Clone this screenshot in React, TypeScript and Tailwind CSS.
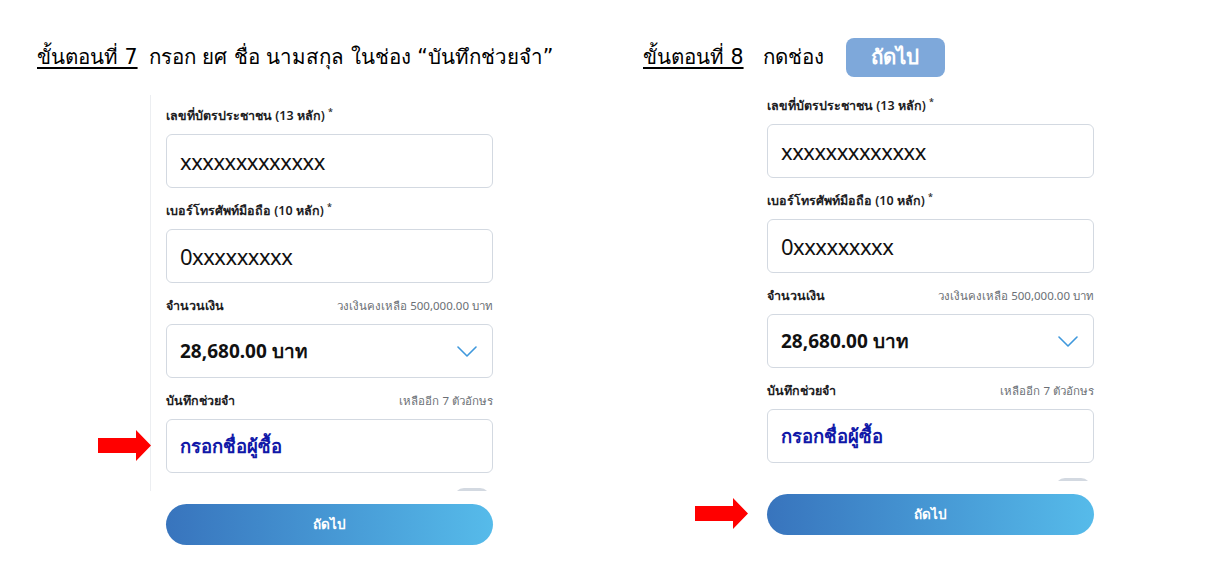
import React, { FC } from "react";

const font = { fontFamily: '"Noto Sans", "Liberation Sans", sans-serif' };
const headFont = { fontFamily: '"DejaVu Sans", "Noto Sans", sans-serif' };

const RedArrow: FC = () => (
  <svg width="53" height="31" viewBox="0 0 53 31">
    <polygon points="0,8 38,8 38,0 53,15.5 38,31 38,23 0,23" fill="#ff0000" />
  </svg>
);

const Chevron: FC = () => (
  <svg width="20" height="11" viewBox="0 0 20 11" fill="none">
    <polyline points="1,1 10,10 19,1" stroke="#3f98dc" strokeWidth="1.6" strokeLinecap="round" strokeLinejoin="round" />
  </svg>
);

interface FieldProps {
  label: string;
  required?: boolean;
  hint?: string;
  children: React.ReactNode;
  arrow?: boolean;
}

const Field: FC<FieldProps> = ({ label, required, hint, children, arrow }) => (
  <div className="flex flex-col">
    <div className="h-[18px] flex items-center justify-between mb-[9px]">
      <span className="text-[12.5px] font-semibold text-[#1d1d1f]">
        {label}
        {required && <sup className="ml-[3px] text-[9px] text-[#333]">*</sup>}
      </span>
      {hint && <span className="text-[11.5px] text-[#6b6f75]">{hint}</span>}
    </div>
    <div className="relative h-[54px] rounded-[6px] border border-[#d3d9e1] bg-white flex items-center justify-between px-[13px]">
      {arrow && (
        <div className="absolute left-[-69px] top-[10px]">
          <RedArrow />
        </div>
      )}
      {children}
    </div>
  </div>
);

const PhoneForm: FC<{ fieldArrow?: boolean; buttonArrow?: boolean; edge?: boolean }> = ({
  fieldArrow,
  buttonArrow,
  edge,
}) => (
  <div className="w-[327px] flex flex-col" style={font}>
    <div className={edge ? "-ml-[16px] pl-[15px] pt-[12px] border-l border-[#eceef1] pb-[18px]" : "pb-[18px]"}>
      <div className="flex flex-col gap-[14px]">
        <Field label="เลขที่บัตรประชาชน (13 หลัก)" required>
          <span className="text-[22px] text-[#111] tracking-[-0.5px]">xxxxxxxxxxxxx</span>
        </Field>
        <Field label="เบอร์โทรศัพท์มือถือ (10 หลัก)" required>
          <span className="text-[22px] text-[#111] tracking-[-0.5px]">0xxxxxxxxx</span>
        </Field>
        <Field label="จำนวนเงิน" hint="วงเงินคงเหลือ 500,000.00 บาท">
          <span className="text-[19px] font-bold text-[#111]">28,680.00 บาท</span>
          <span className="mr-[2px]">
            <Chevron />
          </span>
        </Field>
        <Field label="บันทึกช่วยจำ" hint="เหลืออีก 7 ตัวอักษร" arrow={fieldArrow}>
          <span className="text-[18.5px] font-semibold text-[#1018a8]">กรอกชื่อผู้ซื้อ</span>
        </Field>
      </div>
      <div className="mt-[15px] h-[3px] -mb-[18px] overflow-hidden flex justify-end pr-[3px]">
        <div className="w-[36px] h-[20px] rounded-full bg-[#d3d9e1]" />
      </div>
    </div>
    <div className="relative mt-[13px] h-[41px] rounded-full bg-gradient-to-r from-[#3874bd] to-[#56bbea] flex items-center justify-center">
      {buttonArrow && (
        <div className="absolute left-[-72px] top-[4px]">
          <RedArrow />
        </div>
      )}
      <span className="text-[13.5px] font-semibold text-white">ถัดไป</span>
    </div>
  </div>
);

const App: FC = () => {
  return (
    <div className="w-[1216px] h-[575px] bg-white flex overflow-hidden" style={font}>
      <div className="w-[643px] flex flex-col">
        <div className="mt-[38px] h-[39px] flex items-center pl-[37px] text-[20.5px] text-black" style={headFont}>
          <span className="underline underline-offset-[3px]">ขั้นตอนที่ 7</span>
          <span className="ml-[11px]">กรอก ยศ ชื่อ นามสกุล ในช่อง “บันทึกช่วยจำ”</span>
        </div>
        <div className="ml-[166px] mt-[18px]">
          <PhoneForm fieldArrow edge />
        </div>
      </div>
      <div className="flex flex-col">
        <div className="mt-[38px] h-[39px] flex items-center text-[20.5px] text-black" style={headFont}>
          <span className="underline underline-offset-[3px]">ขั้นตอนที่ 8</span>
          <span className="ml-[19px]">กดช่อง</span>
          <span className="ml-[22px] h-[39px] w-[99px] rounded-[8px] bg-[#7ea8da] text-white font-semibold flex items-center justify-center">
            ถัดไป
          </span>
        </div>
        <div className="ml-[124px] mt-[20px]">
          <PhoneForm buttonArrow />
        </div>
      </div>
    </div>
  );
};

export default App;
